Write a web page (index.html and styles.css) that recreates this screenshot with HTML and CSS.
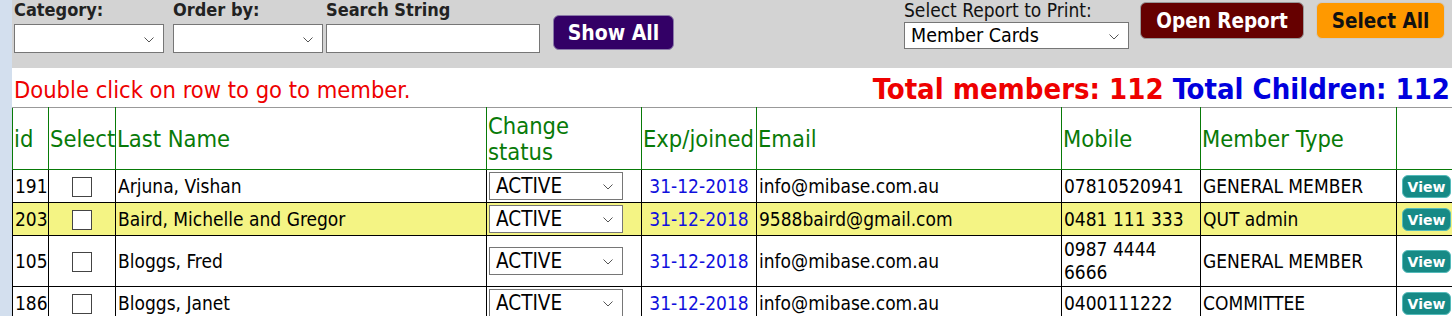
FILE: index.html
```html
<!DOCTYPE html>
<html lang="en">
<head>
    <meta charset="UTF-8">
    <title>Members</title>
    <link rel="stylesheet" href="styles.css">
</head>
<body>
    <div class="page">
        <div class="filter-bar">
            <div class="field">
                <label>Category:</label>
                <span class="dd">
                    <select class="sel sel-cat"><option></option></select>
                    <svg class="chev" width="10" height="6" viewBox="0 0 10 6"><path d="M0.5 0.5 L5 5 L9.5 0.5" fill="none" stroke="#555" stroke-width="1"/></svg>
                </span>
            </div>
            <div class="field field-order">
                <label>Order by:</label>
                <span class="dd">
                    <select class="sel sel-cat"><option></option></select>
                    <svg class="chev" width="10" height="6" viewBox="0 0 10 6"><path d="M0.5 0.5 L5 5 L9.5 0.5" fill="none" stroke="#555" stroke-width="1"/></svg>
                </span>
            </div>
            <div class="field">
                <label>Search String</label>
                <input type="text" class="search">
            </div>
            <button class="btn btn-show">Show All</button>

            <div class="report">
                <div class="field field-report">
                    <label class="plain">Select Report to Print:</label>
                    <span class="dd">
                        <select class="sel sel-report"><option>Member Cards</option></select>
                        <svg class="chev" width="10" height="6" viewBox="0 0 10 6"><path d="M0.5 0.5 L5 5 L9.5 0.5" fill="none" stroke="#555" stroke-width="1"/></svg>
                    </span>
                </div>
                <button class="btn btn-open">Open Report</button>
                <button class="btn btn-all">Select All</button>
            </div>
        </div>

        <div class="info-line">
            <span class="hint">Double click on row to go to member.</span>
            <span class="totals"><span class="t-red">Total members: 112</span> <span class="t-blue">Total Children: 112</span></span>
        </div>

        <table class="members">
            <colgroup>
                <col style="width:36px">
                <col style="width:67px">
                <col style="width:371px">
                <col style="width:155px">
                <col style="width:115px">
                <col style="width:305px">
                <col style="width:139px">
                <col style="width:196px">
                <col style="width:60px">
            </colgroup>
            <thead>
                <tr>
                    <th>id</th>
                    <th>Select</th>
                    <th>Last Name</th>
                    <th>Change<br>status</th>
                    <th>Exp/joined</th>
                    <th>Email</th>
                    <th>Mobile</th>
                    <th>Member Type</th>
                    <th></th>
                </tr>
            </thead>
            <tbody>
                <tr>
                    <td>191</td>
                    <td class="c"><input type="checkbox" class="chk"></td>
                    <td>Arjuna, Vishan</td>
                    <td><span class="dd"><select class="sel sel-status"><option>ACTIVE</option></select><svg class="chev" width="10" height="6" viewBox="0 0 10 6"><path d="M0.5 0.5 L5 5 L9.5 0.5" fill="none" stroke="#555" stroke-width="1"/></svg></span></td>
                    <td class="date">31-12-2018</td>
                    <td>info@mibase.com.au</td>
                    <td>07810520941</td>
                    <td>GENERAL MEMBER</td>
                    <td class="c"><button class="view">View</button></td>
                </tr>
                <tr class="hl">
                    <td>203</td>
                    <td class="c"><input type="checkbox" class="chk"></td>
                    <td>Baird, Michelle and Gregor</td>
                    <td><span class="dd"><select class="sel sel-status"><option>ACTIVE</option></select><svg class="chev" width="10" height="6" viewBox="0 0 10 6"><path d="M0.5 0.5 L5 5 L9.5 0.5" fill="none" stroke="#555" stroke-width="1"/></svg></span></td>
                    <td class="date">31-12-2018</td>
                    <td>9588baird@gmail.com</td>
                    <td>0481 111 333</td>
                    <td>QUT admin</td>
                    <td class="c"><button class="view">View</button></td>
                </tr>
                <tr>
                    <td>105</td>
                    <td class="c"><input type="checkbox" class="chk"></td>
                    <td>Bloggs, Fred</td>
                    <td><span class="dd"><select class="sel sel-status"><option>ACTIVE</option></select><svg class="chev" width="10" height="6" viewBox="0 0 10 6"><path d="M0.5 0.5 L5 5 L9.5 0.5" fill="none" stroke="#555" stroke-width="1"/></svg></span></td>
                    <td class="date">31-12-2018</td>
                    <td>info@mibase.com.au</td>
                    <td>0987 4444 6666</td>
                    <td>GENERAL MEMBER</td>
                    <td class="c"><button class="view">View</button></td>
                </tr>
                <tr>
                    <td>186</td>
                    <td class="c"><input type="checkbox" class="chk"></td>
                    <td>Bloggs, Janet</td>
                    <td><span class="dd"><select class="sel sel-status"><option>ACTIVE</option></select><svg class="chev" width="10" height="6" viewBox="0 0 10 6"><path d="M0.5 0.5 L5 5 L9.5 0.5" fill="none" stroke="#555" stroke-width="1"/></svg></span></td>
                    <td class="date">31-12-2018</td>
                    <td>info@mibase.com.au</td>
                    <td>0400111222</td>
                    <td>COMMITTEE</td>
                    <td class="c"><button class="view">View</button></td>
                </tr>
            </tbody>
        </table>
    </div>
</body>
</html>
```

FILE: styles.css
```css
body {
    margin: 0;
    background: #d3dfee;
    font-family: "DejaVu Sans", sans-serif;
    font-stretch: condensed;
    overflow: hidden;
}
.page {
    margin-left: 12px;
    background: white;
    min-height: 316px;
}
.filter-bar {
    background: #d3d3d3;
    height: 68px;
    display: flex;
    align-items: flex-start;
    padding-left: 2px;
}
.field {
    display: flex;
    flex-direction: column;
    margin-right: 9px;
}
.field-order {
    margin-right: 3px;
}
.field label {
    font-weight: bold;
    font-size: 18px;
    line-height: 18px;
    color: #222;
    margin-top: 1px;
    margin-bottom: 5px;
}
.field label.plain {
    font-weight: normal;
    font-size: 19px;
    color: #111;
    margin-top: 1px;
    margin-bottom: 3px;
}
.dd {
    position: relative;
    display: inline-block;
    vertical-align: middle;
}
.chev {
    position: absolute;
    right: 10px;
    top: 50%;
    margin-top: -2px;
    pointer-events: none;
}
.sel {
    appearance: none;
    -webkit-appearance: none;
    font-family: inherit;
    font-stretch: condensed;
    line-height: normal;
    background: white;
    border: 1px solid #767676;
    border-radius: 0;
    color: #000;
    margin: 0;
    display: block;
}
.sel-cat {
    width: 150px;
    height: 29px;
}
.search {
    width: 214px;
    height: 29px;
    box-sizing: border-box;
    border: 1px solid #767676;
    margin: 0;
}
.btn {
    font-family: inherit;
    font-stretch: condensed;
    font-weight: bold;
    border: none;
    border-radius: 6px;
    cursor: pointer;
    padding: 0;
}
.btn-show {
    background: #330066;
    color: white;
    width: 121px;
    height: 35px;
    font-size: 21px;
    margin-top: 15px;
    margin-left: 4px;
    border: 1px solid #8a7aa8;
}
.report {
    display: flex;
    align-items: flex-start;
    margin-left: auto;
    margin-right: 7px;
}
.sel-report {
    width: 225px;
    height: 27px;
    font-size: 19.5px;
    padding-left: 6px;
}
.btn-open {
    background: #660000;
    color: white;
    width: 164px;
    height: 37px;
    font-size: 20.5px;
    margin-top: 2px;
    border: 1px solid #999;
    margin-left: 2px;
}
.btn-all {
    background: #ff9900;
    color: #111;
    width: 129px;
    height: 37px;
    font-size: 20.5px;
    margin-top: 2px;
    margin-left: 12px;
    border: 1px solid #ccc;
}
.info-line {
    display: flex;
    justify-content: space-between;
    align-items: flex-end;
    padding: 0 2px;
    height: 39px;
}
.hint {
    color: #ee0000;
    font-size: 23.5px;
    line-height: 28px;
    margin-bottom: 3px;
}
.totals {
    font-weight: bold;
    font-size: 29px;
    line-height: 34px;
    margin-bottom: 1px;
}
.t-red {
    color: #ee0000;
}
.t-blue {
    color: #0000dd;
}
.members {
    border-collapse: collapse;
    table-layout: fixed;
    width: 1444px;
    border-top: 1px solid #999;
}
.members th {
    color: #087a08;
    font-weight: normal;
    font-size: 23.5px;
    line-height: 26px;
    text-align: left;
    padding: 4px 1px;
    height: 53px;
    border: 1px solid #087a08;
    border-top-color: #999;
}
.members td {
    font-size: 19px;
    line-height: 23px;
    padding: 2px 2px;
    border: 1px solid #000;
    color: #000;
}
.members tr.hl td {
    background: #f4f484;
}
.members td.c {
    text-align: center;
}
.members td.date {
    text-align: center;
    color: #1010dd;
}
.sel-status {
    width: 134px;
    height: 28px;
    font-size: 20.5px;
    padding: 0 0 0 6px;
}
.chk {
    appearance: none;
    width: 20px;
    height: 20px;
    border: 1px solid #444;
    background: white;
    margin: 0;
    vertical-align: middle;
}
.view {
    background: #178a86;
    color: white;
    font-family: inherit;
    font-weight: bold;
    font-size: 14px;
    border: 1px solid #5bb;
    border-radius: 6px;
    width: 49px;
    height: 23px;
    padding: 0;
    vertical-align: middle;
}
```
